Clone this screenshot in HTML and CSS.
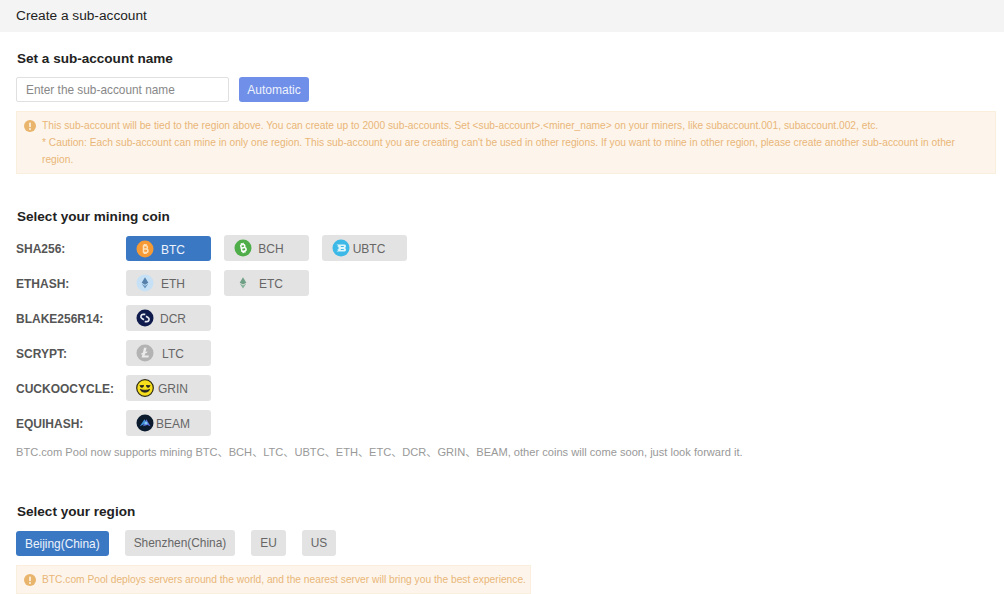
FILE: index.html
```html
<!DOCTYPE html>
<html lang="en">
<head>
<meta charset="utf-8">
<title>Create a sub-account</title>
<link rel="stylesheet" href="styles.css">
</head>
<body>
<header class="page-head">Create a sub-account</header>
<main class="content">
  <section class="name-section">
    <h2 class="title">Set a sub-account name</h2>
    <div class="name-row">
      <input class="name-input" type="text" placeholder="Enter the sub-account name">
      <button class="auto-btn" type="button">Automatic</button>
    </div>
    <div class="alert alert-wide">
      <svg class="alert-icon" viewBox="0 0 12 12"><circle cx="6" cy="6" r="6" fill="#e9b56d"/><rect x="5.2" y="2.4" width="1.6" height="4.8" rx=".6" fill="#fdf6ec"/><circle cx="6" cy="9" r=".95" fill="#fdf6ec"/></svg>
      <p class="alert-text">This sub-account will be tied to the region above. You can create up to 2000 sub-accounts. Set &lt;sub-account&gt;.&lt;miner_name&gt; on your miners, like subaccount.001, subaccount.002, etc.<br>* Caution: Each sub-account can mine in only one region. This sub-account you are creating can't be used in other regions. If you want to mine in other region, please create another sub-account in other region.</p>
    </div>
  </section>

  <section class="coin-section">
    <h2 class="title">Select your mining coin</h2>
    <div class="coin-row">
      <span class="algo">SHA256:</span>
      <button class="coin active" type="button">
        <svg class="coin-icon" viewBox="0 0 18 18"><circle cx="9" cy="9" r="8.5" fill="#f69a36"/><path d="M7.5 5.2v7.600M7.500 5.700h2.300a1.600 1.600 0 0 1 0 3.200H7.500M7.500 8.900h2.700a1.750 1.750 0 0 1 0 3.500H7.500M8.400 4v1.400M10 4v1.400M8.400 12.600V14M10 12.600V14" fill="none" stroke="#fde3bd" stroke-width="1.500"/></svg>
        <span class="coin-name">BTC</span>
      </button>
      <button class="coin" type="button">
        <svg class="coin-icon" viewBox="0 0 18 18"><circle cx="9" cy="9" r="8.500" fill="#4fae4a"/><path d="M7.300 5.400v7.200M7.300 5.700h2.400a1.500 1.500 0 0 1 0 3.100H7.300M7.300 8.800h2.800a1.700 1.700 0 0 1 0 3.400H7.300M8.300 4v1.400M10 4v1.400M8.300 12.600V14M10 12.600V14" fill="none" stroke="#fff" stroke-width="1.500" transform="rotate(-12 9 9)"/></svg>
        <span class="coin-name">BCH</span>
      </button>
      <button class="coin" type="button">
        <svg class="coin-icon" viewBox="0 0 18 18"><circle cx="9" cy="9" r="8.500" fill="#3cb9e6"/><path d="M4.500 5.500h7.800a1.700 1.700 0 0 1 1.100 3v1a1.700 1.700 0 0 1-1.100 3H4.500l2.200-1.700H5.200l1.900-1.800-1.900-1.800h1.500z" fill="#dff5fc"/><path d="M8.800 7.500h3M8.800 10.500h3" stroke="#3cb9e6" stroke-width="1.100"/></svg>
        <span class="coin-name">UBTC</span>
      </button>
    </div>
    <div class="coin-row">
      <span class="algo">ETHASH:</span>
      <button class="coin" type="button">
        <svg class="coin-icon" viewBox="0 0 18 18"><circle cx="9" cy="9" r="8.500" fill="#c6e1f6"/><path d="M9 3.300 5.700 8.800 9 10.800l3.300-2z" fill="#5480ab"/><path d="M5.700 9.700 9 14.500l3.300-4.800L9 11.700z" fill="#6a98c2"/></svg>
        <span class="coin-name">ETH</span>
      </button>
      <button class="coin" type="button">
        <svg class="coin-icon" viewBox="0 0 18 18"><path d="M9 3.300 5.700 8.700 9 10.600l3.300-1.900z" fill="#6f9f85"/><path d="M5.700 9.600 9 14.500l3.300-4.900L9 11.500z" fill="#82b197"/></svg>
        <span class="coin-name">ETC</span>
      </button>
    </div>
    <div class="coin-row">
      <span class="algo">BLAKE256R14:</span>
      <button class="coin" type="button">
        <svg class="coin-icon" viewBox="0 0 18 18"><circle cx="9" cy="9" r="8.500" fill="#0f1b4c"/><path d="M9.300 5.400H7.100a2.200 2.200 0 0 0-1.100 4.100L8 10.700M8.700 12.600h2.200a2.200 2.200 0 0 0 1.100-4.100L10 7.300" fill="none" stroke="#e6e9f2" stroke-width="1.700"/></svg>
        <span class="coin-name">DCR</span>
      </button>
    </div>
    <div class="coin-row">
      <span class="algo">SCRYPT:</span>
      <button class="coin" type="button">
        <svg class="coin-icon" viewBox="0 0 18 18"><circle cx="9" cy="9" r="8.500" fill="#b3b3b3"/><path d="M8 3.800h2.600L9.500 8l1.900-.7-.4 1.500-1.900.7-.5 2h4.300l-.5 1.900H5.600l.9-3.200-1.400.5.400-1.400 1.400-.5z" fill="#ececec"/></svg>
        <span class="coin-name">LTC</span>
      </button>
    </div>
    <div class="coin-row">
      <span class="algo">CUCKOOCYCLE:</span>
      <button class="coin" type="button">
        <svg class="coin-icon" viewBox="0 0 18 18"><circle cx="9" cy="9" r="8.300" fill="#f6de1c" stroke="#2d2a10" stroke-width="1.200"/><path d="M3.400 6.300 8 5.900l-.3 1.600a1.900 1.900 0 0 1-3.400.3zM14.600 6.300 10 5.900l.3 1.600a1.900 1.900 0 0 0 3.400.3z" fill="#222"/><path d="M4.300 10.300c1 3.800 8.400 3.800 9.400 0-1.500 1.300-7.900 1.300-9.400 0z" fill="#222" stroke="#222" stroke-width=".8"/></svg>
        <span class="coin-name">GRIN</span>
      </button>
    </div>
    <div class="coin-row">
      <span class="algo">EQUIHASH:</span>
      <button class="coin" type="button">
        <svg class="coin-icon" viewBox="0 0 18 18"><circle cx="9" cy="9" r="8.500" fill="#0c1a2e"/><path d="M3.800 12.200 8.500 5.200 10.800 9z" fill="#3f8fd8"/><path d="M7 12.200l3.400-7 4.100 7-3.200-1.300z" fill="#5a6fd8"/><circle cx="10" cy="9.200" r="1.400" fill="#7fd0f0"/></svg>
        <span class="coin-name">BEAM</span>
      </button>
    </div>
    <p class="coin-note">BTC.com Pool now supports mining BTC、BCH、LTC、UBTC、ETH、ETC、DCR、GRIN、BEAM, other coins will come soon, just look forward it.</p>
  </section>

  <section class="region-section">
    <h2 class="title">Select your region</h2>
    <div class="region-row">
      <button class="region active" type="button">Beijing(China)</button>
      <button class="region" type="button">Shenzhen(China)</button>
      <button class="region" type="button">EU</button>
      <button class="region" type="button">US</button>
    </div>
    <div class="alert alert-short">
      <svg class="alert-icon" viewBox="0 0 12 12"><circle cx="6" cy="6" r="6" fill="#e9b56d"/><rect x="5.2" y="2.4" width="1.6" height="4.800" rx=".6" fill="#fdf6ec"/><circle cx="6" cy="9" r=".95" fill="#fdf6ec"/></svg>
      <p class="alert-text">BTC.com Pool deploys servers around the world, and the nearest server will bring you the best experience.</p>
    </div>
  </section>
</main>
</body>
</html>
```

FILE: styles.css
```css
* { box-sizing: border-box; }

html, body { height: 594px; overflow: hidden; }

body {
  margin: 0;
  background: #fff;
  font-family: "Liberation Sans", Arial, "Noto Sans CJK SC", sans-serif;
  color: #222;
}

.page-head {
  height: 32px;
  padding-left: 16px;
  line-height: 32px;
  font-size: 13.7px;
  color: #222;
  background: #f4f4f4;
}

.content { padding: 0 8px 0 16px; }

.title {
  margin: 0;
  padding-left: 1px;
  font-size: 13.55px;
  line-height: 18px;
  font-weight: bold;
  color: #222;
}

.name-section { padding-top: 18px; }

.name-row {
  display: flex;
  gap: 10px;
  margin-top: 9px;
}

.name-input {
  width: 213px;
  height: 25px;
  padding: 0 9px;
  border: 1px solid #e0e0e0;
  border-radius: 2px;
  font: 11.85px "Liberation Sans", Arial, sans-serif;
  color: #555;
  outline: none;
}

.name-input::placeholder { color: #888; opacity: 1; }

.auto-btn {
  width: 70px;
  height: 25px;
  padding: 0;
  border: 0;
  border-radius: 3px;
  background: #6f8fe8;
  color: #eef2fd;
  font: 12px "Liberation Sans", Arial, sans-serif;
}

.alert {
  display: flex;
  align-items: flex-start;
  background: #fdf5eb;
  border: 1px solid #faeedd;
  color: #e9b679;
  font-size: 10.22px;
  line-height: 17px;
}

.alert-wide {
  height: 63px;
  margin-top: 9px;
  padding: 5px 10px 0 7px;
}

.alert-short {
  width: 515px;
  height: 29px;
  margin-top: 9px;
  padding: 5px 0 0 7px;
}

.alert-icon {
  flex: none;
  width: 12px;
  height: 12px;
  margin: 3px 6px 0 0;
}

.alert-text { margin: 0; flex: 1; }

.coin-section { padding-top: 34px; }

.coin-section .title { margin-bottom: 9px; }

.coin-row {
  display: flex;
  align-items: flex-start;
  gap: 13px;
  height: 26px;
  margin-bottom: 9px;
}

.algo {
  width: 97px;
  flex: none;
  padding-top: 1px;
  font-size: 12px;
  line-height: 26px;
  font-weight: bold;
  color: #555;
  white-space: nowrap;
}

.coin {
  display: flex;
  align-items: center;
  width: 85px;
  height: 26px;
  padding: 0 19px 0 10px;
  border: 0;
  border-radius: 3px;
  background: #e3e3e3;
  color: #666;
  font: 12px "Liberation Sans", Arial, sans-serif;
}

.coin-icon {
  flex: none;
  width: 18px;
  height: 18px;
}

.coin-name {
  flex: 1;
  padding-top: 2px;
  text-align: center;
  white-space: nowrap;
}

.coin-note {
  margin: -1px 0 0;
  font-size: 11.1px;
  line-height: 16px;
  color: #999;
}

.region-section { padding-top: 43px; }

.region-row {
  display: flex;
  align-items: flex-start;
  gap: 16px;
  margin-top: 9px;
}

.region {
  height: 26px;
  padding: 0 9px;
  border: 0;
  border-radius: 3px;
  background: #e3e3e3;
  color: #666;
  font: 11.9px "Liberation Sans", Arial, sans-serif;
}

.active {
  height: 25px;
  margin-top: 1px;
  background: #3a78c4;
  color: #eef3fb;
}
```
